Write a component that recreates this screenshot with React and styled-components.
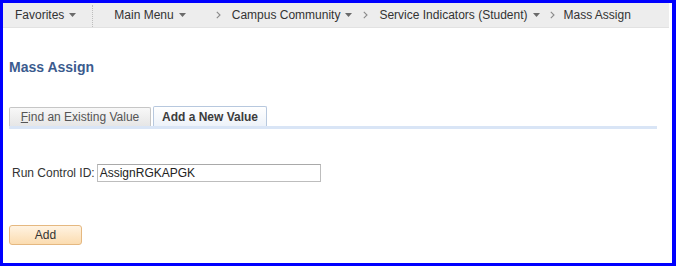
import React from "react";
import styled, { createGlobalStyle } from "styled-components";

const Global = createGlobalStyle`
  html, body { margin: 0; padding: 0; background: #ffffff; }
  body { font-family: "Liberation Sans", Arial, sans-serif; }
  * { box-sizing: border-box; }
`;

const Frame = styled.div`
  width: 676px;
  height: 266px;
  border-style: solid;
  border-color: #0000ff;
  border-width: 3px 4px 3px 3px;
  background: #ffffff;
  display: flex;
  flex-direction: column;
`;

const Header = styled.div`
  height: 25px;
  margin-right: 3px;
  background: #ededed;
  border-bottom: 1px solid #e2e2e2;
  display: flex;
  align-items: center;
  padding-left: 12px;
  font-size: 12px;
  color: #333333;
`;

const Crumb = styled.span`
  display: inline-flex;
  align-items: center;
  gap: 5px;
  white-space: nowrap;
`;

const Separator = styled.span`
  align-self: stretch;
  margin: 2px 21px 0 16px;
  border-left: 1px dotted #bdbdbd;
`;

const Chevron = styled.span`
  display: inline-flex;
  margin: 0 ${(p) => p.$r}px 0 ${(p) => p.$l}px;
`;

const Caret = () => (
  <svg width="7" height="4" viewBox="0 0 7 4">
    <path d="M0 0 L7 0 L3.5 4 Z" fill="#6a6a6a" />
  </svg>
);

const Arrow = ({ l, r }) => (
  <Chevron $l={l} $r={r}>
    <svg width="5" height="8" viewBox="0 0 5 8">
      <path d="M0.8 0.8 L4 4 L0.8 7.2" fill="none" stroke="#8a8a8a" strokeWidth="1.1" />
    </svg>
  </Chevron>
);

const Content = styled.div`
  padding: 0 15px 0 6px;
  display: flex;
  flex-direction: column;
`;

const Title = styled.h1`
  margin: 31px 0 0 0;
  font-size: 14px;
  line-height: 16px;
  font-weight: bold;
  color: #3b5b8e;
`;

const TabBar = styled.div`
  margin-top: 31px;
  display: flex;
  align-items: flex-end;
  gap: 2px;
  border-bottom: 3px solid #d9e5f6;
`;

const Tab = styled.div`
  height: ${(p) => (p.$active ? 20 : 19)}px;
  display: flex;
  align-items: center;
  justify-content: center;
  font-size: 12px;
  white-space: nowrap;
  border: 1px solid ${(p) => (p.$active ? "#b7c8de" : "#c6c6c6")};
  border-bottom: none;
  border-radius: 2px 2px 0 0;
  font-weight: ${(p) => (p.$active ? "bold" : "normal")};
  color: ${(p) => (p.$active ? "#3c3c3c" : "#555555")};
  background: ${(p) =>
    p.$active
      ? "linear-gradient(#ffffff, #edf2f9)"
      : "linear-gradient(#f8f8f8, #e6e6e6)"};
  width: ${(p) => p.$w}px;
`;

const Accel = styled.span`
  text-decoration: underline;
`;

const FormRow = styled.div`
  margin-top: 35px;
  padding-left: 3px;
  display: flex;
  align-items: center;
  gap: 2px;
  font-size: 12px;
  color: #333333;
`;

const TextInput = styled.div`
  width: 224px;
  height: 18px;
  border: 1px solid #bdbdbd;
  border-top-color: #a9a9a9;
  background: #ffffff;
  display: flex;
  align-items: center;
  padding-left: 2px;
  font-size: 12px;
  color: #222222;
`;

const Button = styled.button`
  margin-top: 43px;
  width: 73px;
  height: 20px;
  border: 1px solid #e5b880;
  border-radius: 3px;
  background: linear-gradient(#fff3e2, #fbdcb0);
  font-family: "Liberation Sans", Arial, sans-serif;
  font-size: 12px;
  color: #333333;
  padding: 0;
`;

export default function App() {
  return (
    <>
      <Global />
      <Frame>
        <Header>
          <Crumb>Favorites <Caret /></Crumb>
          <Separator />
          <Crumb>Main Menu <Caret /></Crumb>
          <Arrow l={30} r={11} />
          <Crumb>Campus Community <Caret /></Crumb>
          <Arrow l={11} r={11} />
          <Crumb>Service Indicators (Student) <Caret /></Crumb>
          <Arrow l={10} r={9} />
          <Crumb>Mass Assign</Crumb>
        </Header>
        <Content>
          <Title>Mass Assign</Title>
          <TabBar>
            <Tab $w={142}><span><Accel>F</Accel>ind an Existing Value</span></Tab>
            <Tab $active $w={114}>Add a New Value</Tab>
          </TabBar>
          <FormRow>
            <span>Run Control ID:</span>
            <TextInput>AssignRGKAPGK</TextInput>
          </FormRow>
          <div>
            <Button>Add</Button>
          </div>
        </Content>
      </Frame>
    </>
  );
}
